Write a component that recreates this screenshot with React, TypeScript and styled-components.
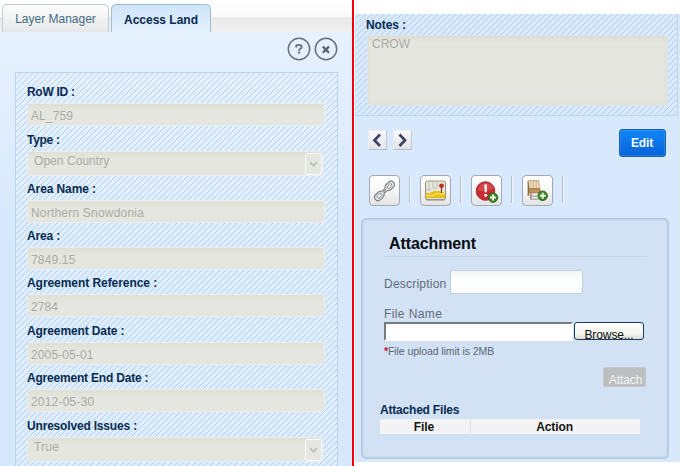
import React from "react";
import styled, { createGlobalStyle, css } from "styled-components";

const Global = createGlobalStyle`
  * { box-sizing: border-box; }
  body { margin: 0; background: #fff; font-family: "Liberation Sans", Arial, sans-serif; }
`;

const hatch = css`
  background-image: repeating-linear-gradient(
    135deg,
    rgba(150, 190, 222, 0) 0 3.1px,
    rgba(148, 186, 220, 0.62) 3.6px 3.7px,
    rgba(150, 190, 222, 0) 4.243px
  );
`;

const Screen = styled.div`
  width: 681px;
  height: 466px;
  display: flex;
  overflow: hidden;
  background: #fff;
`;

const LeftPane = styled.section`
  width: 352px;
  display: flex;
  flex-direction: column;
`;

const Divider = styled.div`
  width: 2px;
  background: #f3000b;
`;

const TabBar = styled.nav`
  height: 32px;
  flex: none;
  display: flex;
  gap: 2px;
  padding: 4px 0 0 2px;
  background: linear-gradient(#fff 0, #fafafa 17px, #e9e9ea 17px, #f0f0f0 32px);
`;

const Tab = styled.button<{ $active?: boolean; $width: number; $spacing: number }>`
  width: ${(p) => p.$width}px;
  height: ${(p) => (p.$active ? 29 : 28)}px;
  padding: 1px 0 0;
  border: 1px solid ${(p) => (p.$active ? "#9dbdcc" : "#c3cbcf")};
  border-bottom: 0;
  border-radius: 5px 5px 0 0;
  background: ${(p) =>
    p.$active ? "linear-gradient(#cfe5fa, #e6f1fe)" : "linear-gradient(#fdfdfd, #f4f4f5 12px, #e6e7e8)"};
  color: ${(p) => (p.$active ? "#062a50" : "#3f6a86")};
  font: ${(p) => (p.$active ? "bold " : "")}12px "Liberation Sans", Arial, sans-serif;
  letter-spacing: ${(p) => p.$spacing}px;
  white-space: nowrap;
`;

const LeftBody = styled.div`
  flex: 1;
  display: flex;
  flex-direction: column;
  padding: 5px 14px 0 15px;
  background: linear-gradient(#e6f1fe, #d7e8fd 210px);
`;

const PanelTools = styled.div`
  height: 35px;
  flex: none;
  display: flex;
  justify-content: flex-end;
  gap: 3px;
`;

const RoundButton = styled.button`
  width: 24px;
  height: 24px;
  padding: 0;
  border: 0;
  background: none;
  svg { display: block; }
`;

const FieldPanel = styled.form`
  flex: 1;
  width: 323px;
  padding: 6px 12px 0 11px;
  border: 1px solid #bdd5ec;
  border-bottom: 0;
  background-color: rgba(226, 240, 255, 0.6);
  ${hatch}
`;

const Field = styled.label`
  display: block;
`;

const FieldLabel = styled.span<{ $height: number; $spacing?: number }>`
  display: flex;
  align-items: flex-end;
  height: ${(p) => p.$height}px;
  padding-bottom: 4px;
  font-size: 12px;
  font-weight: bold;
  line-height: 14px;
  letter-spacing: ${(p) => p.$spacing ?? 0}px;
  white-space: pre;
  color: #062b50;
`;

const disabledFill = css`
  background-color: #e4e6df;
  background-image: linear-gradient(rgba(221, 218, 205, 0.55), rgba(229, 231, 223, 0) 7px);
  border: 1px solid #e9edee;
  border-radius: 3px;
  color: #aaaca5;
  font-size: 12px;
`;

const ReadOnly = styled.span<{ $spacing: number; $select?: boolean }>`
  ${disabledFill}
  display: flex;
  justify-content: space-between;
  align-items: ${(p) => (p.$select ? "flex-start" : "center")};
  width: ${(p) => (p.$select ? 296 : 298)}px;
  height: ${(p) => (p.$select ? 25 : 23)}px;
  padding: ${(p) => (p.$select ? "0 0 0 6px" : "2px 0 0 3px")};
  letter-spacing: ${(p) => p.$spacing}px;
  line-height: ${(p) => (p.$select ? 19 : 20)}px;
`;

const DropArrow = styled.span`
  display: flex;
  align-items: center;
  justify-content: center;
  width: 17px;
  height: 22px;
  margin-top: 1px;
  border: 1px solid #f7f9fa;
  border-radius: 2px;
  background: #e5e7e1;
`;

const RightPane = styled.section`
  width: 325px;
  height: 448px;
  margin: 14px 0 0 1px;
  display: flex;
  flex-direction: column;
  background: #d8e8fd;
`;

const NotesPanel = styled.div`
  height: 102px;
  padding: 3px 9px 0 11px;
  margin-right: 2px;
  border-right: 1px solid #bed5ed;
  border-bottom: 1px solid #c2d8ee;
  ${hatch}
`;

const NotesLabel = styled(FieldLabel)`
  padding-bottom: 3px;
`;

const NotesArea = styled.div`
  ${disabledFill}
  height: 71px;
  margin-left: 1px;
  padding: 1px 4px;
  border-radius: 2px;
  border-color: #dce6e9;
  box-shadow: inset 0 0 5px #dedccf;
  letter-spacing: 0;
  line-height: 14px;
`;

const ActionRow = styled.div`
  display: flex;
  justify-content: space-between;
  align-items: flex-start;
  height: 59px;
  padding: 13px 14px 0 13px;
`;

const Pager = styled.div`
  display: flex;
  gap: 6px;
  padding-top: 1px;
`;

const PageButton = styled.button`
  width: 19px;
  height: 20px;
  padding: 0;
  display: grid;
  place-items: center;
  border: 1px solid #e9edf2;
  border-right-color: #bfc9d6;
  border-bottom-color: #b4bfcd;
  background: linear-gradient(#f8f8fa, #e2e4e9);
`;

const EditButton = styled.button`
  width: 47px;
  height: 28px;
  padding: 0 1px 1px 0;
  border: 1px solid #1663ae;
  border-radius: 3px;
  box-shadow: inset 0 0 0 1px rgba(79, 165, 245, 0.35);
  background: linear-gradient(#0f86f5, #0862d8);
  color: #f4faff;
  font: bold 12px "Liberation Sans", Arial, sans-serif;
  letter-spacing: -0.2px;
`;

const IconRow = styled.div`
  display: flex;
  height: 43px;
  padding-left: 14px;
`;

const IconCell = styled.div`
  width: 51.1px;
  display: flex;
  gap: 9px;
  align-items: flex-start;
`;

const IconButton = styled.button`
  width: 31px;
  height: 31px;
  flex: none;
  padding: 0;
  display: grid;
  place-items: center;
  border: 1px solid #a4a9b1;
  border-radius: 4px;
  background: linear-gradient(#fff, #f7f7f8 50%, #e2e3e5);
`;

const IconRule = styled.span`
  width: 2px;
  height: 27px;
  margin-top: 1px;
  border-left: 1px solid #b5bfcb;
  border-right: 1px solid #f1f6fc;
`;

const AttachmentBox = styled.section`
  width: 308px;
  height: 241px;
  margin-left: 6px;
  padding: 15px 21px 0 18px;
  border: 1px solid #b2c6e0;
  border-radius: 5px;
  background: #d2e1f4;
  box-shadow: inset 0 0 2px 1px #b9cce5;
`;

const Title = styled.h2`
  height: 23px;
  margin: 0 0 0 4px;
  padding-left: 5px;
  border-bottom: 1px solid #c8d5e5;
  font: bold 16px/19px "Liberation Sans", Arial, sans-serif;
  letter-spacing: -0.1px;
  color: #080c12;
`;

const FormLine = styled.div`
  display: flex;
  align-items: center;
  height: 24px;
  margin: 13px 0 0 4px;
  color: #626b78;
  font-size: 12px;
`;

const FormText = styled.span`
  width: 66px;
  padding-top: 4px;
  letter-spacing: 0.22px;
`;

const TextInput = styled.input`
  width: 133px;
  height: 24px;
  border: 1px solid #c6ced8;
  border-radius: 2px;
  background: linear-gradient(#f1f3f4, #fdfefe 8px, #fbfcfd);
`;

const FileLabel = styled.div`
  height: 15px;
  margin: 13px 0 0 4px;
  color: #626b78;
  font-size: 12px;
  line-height: 15px;
  letter-spacing: 0.4px;
`;

const FileRow = styled.div`
  display: flex;
  gap: 1px;
  margin-left: 4px;
`;

const FilePath = styled.input`
  width: 189px;
  height: 19px;
  border: 2px solid #fff;
  border-top-color: #777b80;
  border-left-color: #777b80;
  background: #fff;
`;

const BrowseButton = styled.button`
  width: 70px;
  height: 18px;
  padding: 6px 0 0;
  border: 1px solid #173d62;
  border-radius: 3px;
  background: linear-gradient(#fff, #f3f3ee 70%, #dddccf);
  color: #111;
  font: 12px/12px "Liberation Sans", Arial, sans-serif;
  letter-spacing: -0.1px;
`;

const Hint = styled.div`
  height: 26px;
  margin-left: 4px;
  padding-top: 4px;
  color: #5b6674;
  font-size: 10.5px;
  line-height: 12px;
  letter-spacing: -0.08px;
  white-space: nowrap;
  span { color: #c8102e; font-weight: bold; }
`;

const AttachButton = styled.button`
  display: block;
  width: 43px;
  height: 20px;
  margin: 0 0 0 auto;
  padding: 5px 0 0 2px;
  border: 1px solid #c6c7c9;
  border-radius: 2px;
  background: #bdbebf;
  color: #f5f6f7;
  font: 12px/12px "Liberation Sans", Arial, sans-serif;
  letter-spacing: -0.1px;
  transform: translateX(-1px);
`;

const FilesTitle = styled.h3`
  margin: 16px 0 0;
  height: 16px;
  color: #062b50;
  font: bold 12px/14px "Liberation Sans", Arial, sans-serif;
  letter-spacing: -0.2px;
  white-space: nowrap;
`;

const FilesHeader = styled.div`
  display: grid;
  grid-template-columns: 91px 169px;
  width: 260px;
  height: 15px;
  background: #f3f3f4;
  color: #151515;
  font-size: 12px;
  font-weight: bold;
  line-height: 16px;
  letter-spacing: -0.1px;
  text-align: center;
  span:first-child { border-right: 1px solid #e0e5ea; padding-right: 2px; }
  span:last-child { padding-right: 2px; }
`;

const HelpIcon = () => (
  <svg width="24" height="24" viewBox="0 0 24 24" fill="none">
    <circle cx="12" cy="12" r="10.7" stroke="#6a6e7a" strokeWidth="1.5" />
    <path d="M9.2 10.6V9.2C9.4 7.3 14.7 7.3 14.7 9.7 14.7 11.8 12 11.3 12 13.8" stroke="#6a6e79" strokeWidth="1.9" />
    <rect x="10.9" y="14.6" width="2.2" height="1.9" fill="#6a6e79" />
  </svg>
);

const CloseIcon = () => (
  <svg width="24" height="24" viewBox="0 0 24 24" fill="none">
    <circle cx="12" cy="12" r="10.7" stroke="#6a6e7a" strokeWidth="1.5" />
    <path d="M8.8 9.5l6.2 6.2M15 9.5l-6.2 6.2" stroke="#5c606b" strokeWidth="2.3" />
  </svg>
);

const DownIcon = () => (
  <svg width="9" height="7" viewBox="0 0 9 7" fill="none">
    <path d="M1 1.2l3.5 3.5L8 1.2" stroke="#c1c1b8" strokeWidth="2" />
  </svg>
);

const Chevron = ({ right }: { right?: boolean }) => (
  <svg width="11" height="15" viewBox="0 0 11 15" fill="none">
    <path d={right ? "M2.5 1.5L8 7.2 2.5 13" : "M8 1.5L2.5 7.2 8 13"} stroke="#3f4264" strokeWidth="2.7" />
  </svg>
);

const Plus = ({ x, y }: { x: number; y: number }) => (
  <g transform={`translate(${x} ${y})`}>
    <circle r="4.8" fill="#3c8126" stroke="#27601d" strokeWidth=".8" />
    <path d="M-3 0h6M0-3v6" stroke="#eafadb" strokeWidth="2" />
  </g>
);

const LinkIcon = () => (
  <svg width="29" height="29" viewBox="0 0 29 29" fill="none">
    <g transform="translate(1.5 1.4) scale(.9) rotate(-44 14.5 15)" stroke="#777b7f">
      <path
        d="M4 11.2h5c2 0 2.4 2.2 3.8 2.2h3.4c1.4 0 1.8-2.2 3.8-2.2h5c4.4 0 4.4 7.6 0 7.6h-5c-2 0-2.4-2.2-3.8-2.2h-3.4c-1.4 0-1.8 2.2-3.8 2.2H4c-4.4 0-4.4-7.6 0-7.6z"
        fill="#e2e3e4"
        strokeWidth="1.2"
      />
      <rect x="3.8" y="13.5" width="6" height="3" rx="1.5" fill="#fff" />
      <rect x="19.2" y="13.5" width="6" height="3" rx="1.5" fill="#fff" />
      <path d="M12 15h5" strokeWidth="1" />
    </g>
  </svg>
);

const MapIcon = () => (
  <svg width="29" height="29" viewBox="0 0 29 29" fill="none">
    <rect x="4.5" y="5" width="20" height="19" rx="2" fill="#e9e6d8" stroke="#9c9270" />
    <path d="M5 17h4l4-2h5l6 2v5H5z" fill="#e9bd1c" />
    <path d="M5 19.5h7l3-1.7h9" stroke="#ffe15b" strokeWidth="1.3" />
    <path d="M8 6v8M12 6v6h4V6M5 14h5" stroke="#b4c0c4" />
    <path d="M5 23.5h19" stroke="#8f9a98" strokeWidth="1.2" />
    <path d="M20.5 12v5" stroke="#8a3b23" strokeWidth="1.2" />
    <circle cx="20.5" cy="9.8" r="2.4" fill="#c22f2b" />
  </svg>
);

const AlertIcon = () => (
  <svg width="29" height="29" viewBox="0 0 29 29" fill="none">
    <circle cx="13.5" cy="15" r="9.3" fill="#ca2b31" stroke="#a8343a" />
    <path d="M5.8 14.5c1-9 14.2-9.5 15.5-1.5-5 1-8 3.5-15.5 1.5z" fill="#e27577" opacity=".4" />
    <path d="M12.3 8.5h2.8l-.5 7.8h-1.8z" fill="#fff" />
    <circle cx="13.7" cy="19.2" r="1.5" fill="#fff" />
    <Plus x={21} y={21.6} />
  </svg>
);

const ChairIcon = () => (
  <svg width="29" height="29" viewBox="0 0 29 29" fill="none">
    <path d="M4.8 4.8h11l.5 8.4H6.3z" fill="#f4e6cc" stroke="#b99a70" />
    <path d="M7.7 5l.7 8M10.5 5l.2 8M13.2 5v8" stroke="#cba778" />
    <path d="M5.3 12.8h11.5l.8 4H6z" fill="#c4935a" stroke="#8d6336" strokeWidth=".8" />
    <path d="M5.3 6.5V20M7.9 17v6.5M16.5 17v6" stroke="#8a6843" strokeWidth="1.3" />
    <path d="M8.5 20.3h6M7.5 23.2h8" stroke="#b0aea9" strokeWidth="1.4" />
    <Plus x={19.7} y={19.8} />
  </svg>
);

type FieldData = {
  label: string;
  value: string;
  slot: number;
  labelSpacing: number;
  valueSpacing: number;
  select?: boolean;
};

const fields: FieldData[] = [
  { label: "RoW ID :", value: "AL_759", slot: 24, labelSpacing: -0.3, valueSpacing: 0.1 },
  { label: "Type :", value: "Open Country", slot: 25, labelSpacing: -0.3, valueSpacing: 0.05, select: true },
  { label: "Area Name :", value: "Northern Snowdonia", slot: 24, labelSpacing: -0.1, valueSpacing: 0.2 },
  { label: "Area :", value: "7849.15", slot: 24, labelSpacing: -0.15, valueSpacing: 0.15 },
  { label: "Agreement Reference :", value: "2784", slot: 24, labelSpacing: -0.06, valueSpacing: 0.1 },
  { label: "Agreement Date :", value: "2005-05-01", slot: 25, labelSpacing: -0.12, valueSpacing: 0.12 },
  { label: "Agreement End Date :", value: "2012-05-30", slot: 24, labelSpacing: -0.2, valueSpacing: 0.2 },
  { label: "Unresolved Issues :", value: "True", slot: 25, labelSpacing: -0.18, valueSpacing: 0.2, select: true },
];

const toolIcons = [LinkIcon, MapIcon, AlertIcon, ChairIcon];

export default function App() {
  return (
    <>
      <Global />
      <Screen>
        <LeftPane>
          <TabBar>
            <Tab $width={107} $spacing={0}>Layer Manager</Tab>
            <Tab $active $width={100} $spacing={0}>Access Land</Tab>
          </TabBar>
          <LeftBody>
            <PanelTools>
              <RoundButton aria-label="Help"><HelpIcon /></RoundButton>
              <RoundButton aria-label="Close"><CloseIcon /></RoundButton>
            </PanelTools>
            <FieldPanel>
              {fields.map((f) => (
                <Field key={f.label}>
                  <FieldLabel $height={f.slot} $spacing={f.labelSpacing}>{f.label}</FieldLabel>
                  <ReadOnly $select={f.select} $spacing={f.valueSpacing}>
                    {f.value}
                    {f.select && <DropArrow><DownIcon /></DropArrow>}
                  </ReadOnly>
                </Field>
              ))}
            </FieldPanel>
          </LeftBody>
        </LeftPane>
        <Divider />
        <RightPane>
          <NotesPanel>
            <NotesLabel $height={18} $spacing={-0.1}>Notes :</NotesLabel>
            <NotesArea>CROW</NotesArea>
          </NotesPanel>
          <ActionRow>
            <Pager>
              <PageButton aria-label="Previous"><Chevron /></PageButton>
              <PageButton aria-label="Next"><Chevron right /></PageButton>
            </Pager>
            <EditButton>Edit</EditButton>
          </ActionRow>
          <IconRow>
            {toolIcons.map((Icon, i) => (
              <IconCell key={i}>
                <IconButton><Icon /></IconButton>
                <IconRule />
              </IconCell>
            ))}
          </IconRow>
          <AttachmentBox>
            <Title>Attachment</Title>
            <FormLine>
              <FormText>Description</FormText>
              <TextInput aria-label="Description" />
            </FormLine>
            <FileLabel>File Name</FileLabel>
            <FileRow>
              <FilePath aria-label="File Name" />
              <BrowseButton>Browse...</BrowseButton>
            </FileRow>
            <Hint><span>*</span>File upload limit is 2MB</Hint>
            <AttachButton>Attach</AttachButton>
            <FilesTitle>Attached Files</FilesTitle>
            <FilesHeader>
              <span>File</span>
              <span>Action</span>
            </FilesHeader>
          </AttachmentBox>
        </RightPane>
      </Screen>
    </>
  );
}
